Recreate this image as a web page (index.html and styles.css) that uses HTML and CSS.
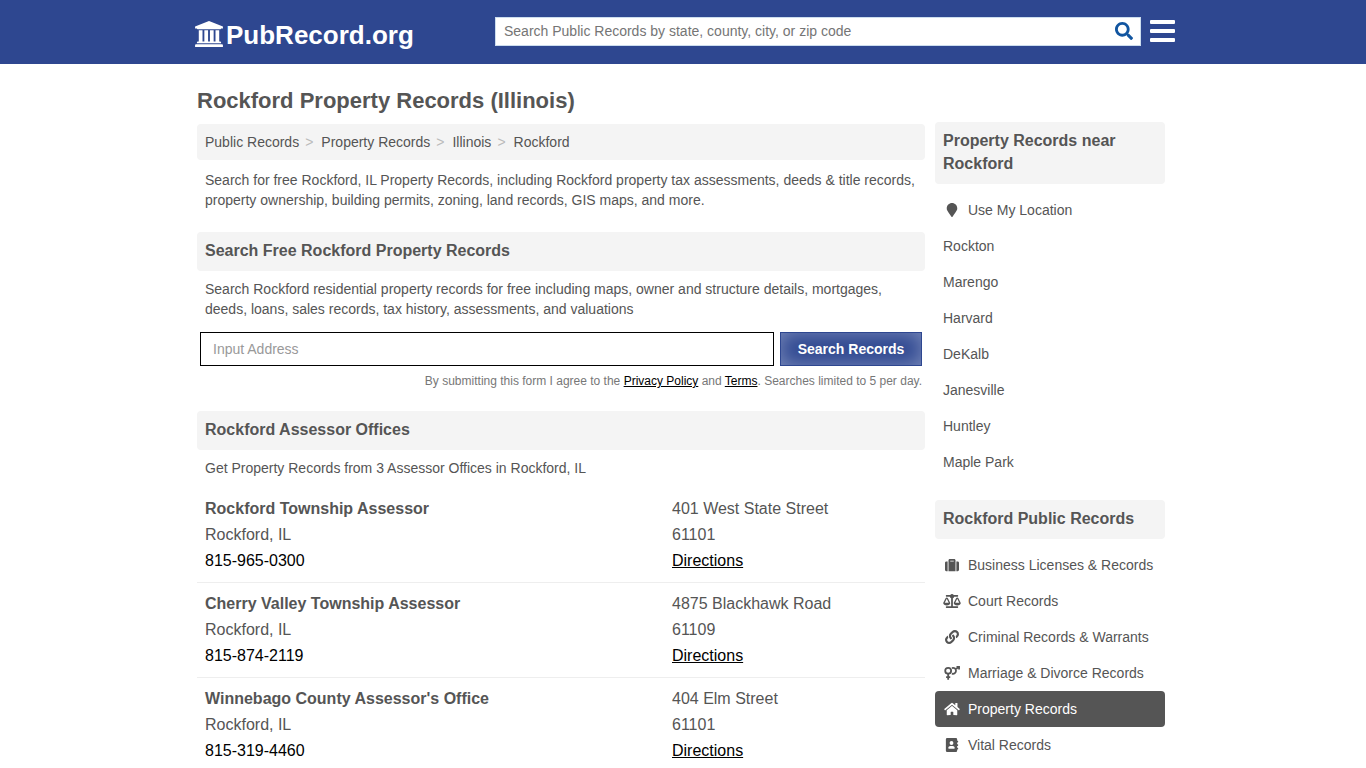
FILE: index.html
```html
<!DOCTYPE html>
<html lang="en">
<head>
<meta charset="utf-8">
<title>Rockford Property Records (Illinois)</title>
<link rel="stylesheet" href="styles.css">
</head>
<body>
<header class="topbar">
  <div class="topbar-inner">
    <a class="logo" href="#">
      <svg class="logo-icon" viewBox="0 0 1920 1792" aria-hidden="true"><path d="M960 0l960 384v128h-128q0 26-20.500 45t-48.500 19H197q-28 0-48.500-19t-20.500-45H0V384zM256 640h256v768h128V640h256v768h128V640h256v768h128V640h256v768h59q28 0 48.500 19t20.500 45v64H128v-64q0-26 20.500-45t48.500-19h59V640zm1595 960q28 0 48.500 19t20.500 45v128H0v-128q0-26 20.500-45t48.500-19h1782z"/></svg>
      <span>PubRecord.org</span>
    </a>
    <form class="site-search">
      <input class="site-search-input" type="text" aria-label="Search Public Records" placeholder="Search Public Records by state, county, city, or zip code">
      <button class="site-search-button" type="button" aria-label="Search">
        <svg viewBox="0 0 512 512" aria-hidden="true"><path d="M505 442.7L405.3 343c-4.500-4.500-10.600-7-17-7H372c27.600-35.300 44-79.700 44-128C416 93.100 322.900 0 208 0S0 93.100 0 208s93.100 208 208 208c48.300 0 92.700-16.400 128-44v16.300c0 6.400 2.500 12.500 7 17l99.700 99.700c9.400 9.400 24.600 9.400 33.900 0l28.300-28.300c9.400-9.400 9.400-24.600.1-34zM208 336c-70.700 0-128-57.200-128-128 0-70.700 57.200-128 128-128 70.700 0 128 57.200 128 128 0 70.700-57.200 128-128 128z"/></svg>
      </button>
    </form>
    <button class="menu-button" type="button" aria-label="Menu">
      <svg viewBox="0 0 25 22" aria-hidden="true"><path d="M1 0h23a1 1 0 0 1 1 1v2a1 1 0 0 1-1 1H1a1 1 0 0 1-1-1V1a1 1 0 0 1 1-1zM1 9h23a1 1 0 0 1 1 1v2a1 1 0 0 1-1 1H1a1 1 0 0 1-1-1v-2a1 1 0 0 1 1-1zM1 18h23a1 1 0 0 1 1 1v2a1 1 0 0 1-1 1H1a1 1 0 0 1-1-1v-2a1 1 0 0 1 1-1z"/></svg>
    </button>
  </div>
</header>

<div class="page">
  <main class="content">
    <h1 class="title">Rockford Property Records (Illinois)</h1>
    <nav aria-label="Breadcrumb">
      <ol class="breadcrumb">
        <li><a href="#">Public Records</a></li>
        <li><a href="#">Property Records</a></li>
        <li><a href="#">Illinois</a></li>
        <li><a href="#">Rockford</a></li>
      </ol>
    </nav>
    <p class="text">Search for free Rockford, IL Property Records, including Rockford property tax assessments, deeds &amp; title records, property ownership, building permits, zoning, land records, GIS maps, and more.</p>

    <section class="section">
      <h2 class="heading">Search Free Rockford Property Records</h2>
      <p class="text">Search Rockford residential property records for free including maps, owner and structure details, mortgages, deeds, loans, sales records, tax history, assessments, and valuations</p>
      <form class="address-form">
        <input class="address-input" type="text" aria-label="Address" placeholder="Input Address">
        <button class="address-button" type="button">Search Records</button>
      </form>
      <p class="terms">By submitting this form I agree to the <a href="#">Privacy Policy</a> and <a href="#">Terms</a>. Searches limited to 5 per day.</p>
    </section>

    <section class="section">
      <h2 class="heading">Rockford Assessor Offices</h2>
      <p class="text">Get Property Records from 3 Assessor Offices in Rockford, IL</p>
      <ul class="offices">
        <li class="office">
          <div><h3 class="office-name">Rockford Township Assessor</h3><div>Rockford, IL</div><a class="phone" href="#">815-965-0300</a></div>
          <div><div>401 West State Street</div><div>61101</div><a class="directions" href="#">Directions</a></div>
        </li>
        <li class="office">
          <div><h3 class="office-name">Cherry Valley Township Assessor</h3><div>Rockford, IL</div><a class="phone" href="#">815-874-2119</a></div>
          <div><div>4875 Blackhawk Road</div><div>61109</div><a class="directions" href="#">Directions</a></div>
        </li>
        <li class="office">
          <div><h3 class="office-name">Winnebago County Assessor's Office</h3><div>Rockford, IL</div><a class="phone" href="#">815-319-4460</a></div>
          <div><div>404 Elm Street</div><div>61101</div><a class="directions" href="#">Directions</a></div>
        </li>
      </ul>
    </section>
  </main>

  <aside class="sidebar">
    <section>
      <h2 class="heading">Property Records near Rockford</h2>
      <ul class="links">
        <li><a href="#"><svg class="icon" viewBox="-64 0 512 512" aria-hidden="true"><path d="M172.268 501.670C26.970 291.031 0 269.413 0 192 0 85.961 85.961 0 192 0s192 85.961 192 192c0 77.413-26.970 99.031-172.268 309.670-9.535 13.774-29.930 13.773-39.464 0z"/></svg>Use My Location</a></li>
        <li><a href="#">Rockton</a></li>
        <li><a href="#">Marengo</a></li>
        <li><a href="#">Harvard</a></li>
        <li><a href="#">DeKalb</a></li>
        <li><a href="#">Janesville</a></li>
        <li><a href="#">Huntley</a></li>
        <li><a href="#">Maple Park</a></li>
      </ul>
    </section>
    <section>
      <h2 class="heading">Rockford Public Records</h2>
      <ul class="links">
        <li><a href="#"><svg class="icon" viewBox="0 0 512 512" aria-hidden="true"><path d="M128 480h256V80c0-26.500-21.500-48-48-48H176c-26.500 0-48 21.500-48 48v400zm64-384h128v32H192V96zm320 80v256c0 26.500-21.500 48-48 48h-48V128h48c26.500 0 48 21.500 48 48zM96 480H48c-26.500 0-48-21.500-48-48V176c0-26.500 21.500-48 48-48h48v352z"/></svg>Business Licenses &amp; Records</a></li>
        <li><a href="#"><svg class="icon" viewBox="0 0 640 512" aria-hidden="true"><path d="M256 336h-.02c0-16.180 1.340-8.730-85.050-181.510-17.650-35.290-68.190-35.360-85.870 0C-2.060 328.750.02 320.330.02 336H0c0 44.180 57.310 80 128 80s128-35.820 128-80zM128 176l72 144H56l72-144zm511.980 160c0-16.180 1.340-8.730-85.050-181.510-17.650-35.290-68.190-35.360-85.870 0-87.120 174.260-85.040 165.840-85.040 181.510H384c0 44.180 57.310 80 128 80s128-35.820 128-80h-.02zM440 320l72-144 72 144H440zm88 128H352V153.250c23.510-10.290 41.160-31.480 46.390-57.250H528c8.840 0 16-7.160 16-16V48c0-8.840-7.160-16-16-16H383.640C369.040 12.680 346.090 0 320 0s-49.040 12.680-63.640 32H112c-8.840 0-16 7.160-16 16v32c0 8.840 7.160 16 16 16h129.610c5.230 25.760 22.870 46.960 46.390 57.250V448H112c-8.840 0-16 7.160-16 16v32c0 8.840 7.160 16 16 16h416c8.840 0 16-7.160 16-16v-32c0-8.840-7.160-16-16-16z"/></svg>Court Records</a></li>
        <li><a href="#"><svg class="icon" viewBox="0 0 512 512" aria-hidden="true"><path d="M326.612 185.391c59.747 59.809 58.927 155.698.36 214.590-.11.12-.24.25-.36.37l-67.200 67.200c-59.270 59.270-155.699 59.262-214.960 0-59.270-59.260-59.270-155.700 0-214.960l37.106-37.106c9.840-9.840 26.786-3.300 27.294 10.606.648 17.722 3.826 35.527 9.690 52.721 1.986 5.822.567 12.262-3.783 16.612l-13.087 13.087c-28.026 28.026-28.905 73.660-1.155 101.960 28.024 28.579 74.086 28.749 102.325.51l67.200-67.190c28.191-28.191 28.073-73.757 0-101.830-3.701-3.694-7.429-6.564-10.341-8.569a16.037 16.037 0 0 1-6.947-12.606c-.396-10.567 3.348-21.456 11.698-29.806l21.054-21.055c5.521-5.521 14.182-6.199 20.584-1.731a152.482 152.482 0 0 1 20.522 17.197zM467.547 44.449c-59.261-59.262-155.690-59.270-214.960 0l-67.200 67.200c-.12.12-.25.25-.36.37-58.566 58.892-59.387 154.781.36 214.590a152.454 152.454 0 0 0 20.521 17.196c6.402 4.468 15.064 3.789 20.584-1.731l21.054-21.055c8.350-8.350 12.094-19.239 11.698-29.806a16.037 16.037 0 0 0-6.947-12.606c-2.912-2.005-6.640-4.875-10.341-8.569-28.073-28.073-28.191-73.639 0-101.830l67.200-67.190c28.239-28.239 74.300-28.069 102.325.51 27.750 28.300 26.872 73.934-1.155 101.960l-13.087 13.087c-4.350 4.350-5.769 10.790-3.783 16.612 5.864 17.194 9.042 34.999 9.690 52.721.509 13.906 17.454 20.446 27.294 10.606l37.106-37.106c59.271-59.259 59.271-155.699.001-214.959z"/></svg>Criminal Records &amp; Warrants</a></li>
        <li><a href="#"><svg class="icon outline" viewBox="0 0 640 512" aria-hidden="true"><circle cx="180" cy="176" r="108"/><path d="M180 284v220M104 410h152M318 76a108 108 0 1 1 0 200M480 108L570 22M484 30h94v94"/></svg>Marriage &amp; Divorce Records</a></li>
        <li><a class="current" href="#" aria-current="page"><svg class="icon" viewBox="0 0 576 512" aria-hidden="true"><path d="M280.370 148.260L96 300.110V464a16 16 0 0 0 16 16l112.060-.29a16 16 0 0 0 15.920-16V368a16 16 0 0 1 16-16h64a16 16 0 0 1 16 16v95.640a16 16 0 0 0 16 16.050L464 480a16 16 0 0 0 16-16V300L295.670 148.260a12.190 12.190 0 0 0-15.300 0zM571.600 251.470L488 182.560V44.050a12 12 0 0 0-12-12h-56a12 12 0 0 0-12 12v72.610L318.470 43a48 48 0 0 0-61 0L4.340 251.470a12 12 0 0 0-1.600 16.900l25.500 31A12 12 0 0 0 45.150 301l235.220-193.740a12.190 12.190 0 0 1 15.300 0L530.900 301a12 12 0 0 0 16.900-1.600l25.500-31a12 12 0 0 0-1.700-16.930z"/></svg>Property Records</a></li>
        <li><a href="#"><svg class="icon" viewBox="0 0 512 512" aria-hidden="true"><path fill-rule="evenodd" d="M80 0h316q48 0 48 48v48h22q14 0 14 14v36q0 14-14 14h-22v64h22q14 0 14 14v36q0 14-14 14h-22v64h22q14 0 14 14v36q0 14-14 14h-22v48q0 48-48 48H80q-48 0-48-48V48Q32 0 80 0zM238 112a70 70 0 1 0 0 140a70 70 0 1 0 0-140zM120 370q0 22 24 22h188q24 0 24-22v-8c0-42-34-74-78-74q-40 18-80 0c-44 0-78 32-78 74z"/></svg>Vital Records</a></li>
      </ul>
    </section>
  </aside>
</div>
</body>
</html>
```
FILE: styles.css
```css
* {
  box-sizing: border-box;
}

body {
  margin: 0;
  background: #fff;
  color: #555;
  font: 14px/20px Arial, "Liberation Sans", sans-serif;
}

h1, h2, h3, p, ul, ol {
  margin: 0;
  padding: 0;
  list-style: none;
}

a {
  color: inherit;
  text-decoration: none;
}

button, input {
  font-family: inherit;
  font-size: 14px;
  border-radius: 0;
}

svg {
  display: block;
  fill: currentColor;
}

.topbar {
  background: #2e4790;
}

.topbar-inner {
  display: flex;
  align-items: center;
  max-width: 984px;
  min-height: 64px;
  margin: 0 auto;
  padding: 0 0 2px 4px;
}

.logo {
  display: flex;
  align-items: center;
  flex: 0 0 300px;
  gap: 3px;
  padding-top: 8px;
  color: #fff;
  font-size: 26px;
  line-height: 30px;
  font-weight: bold;
}

.logo-icon {
  width: 28px;
  height: 26px;
  margin-bottom: 2px;
}

.site-search {
  display: flex;
  flex: 1;
  height: 29px;
  background: #fff;
  border: 1px solid #cde;
}

.site-search-input {
  flex: 1;
  min-width: 0;
  padding: 0 8px;
  border: 0;
  background: none;
}

.site-search-input::placeholder {
  color: #757575;
}

.site-search-button {
  padding: 0 7px;
  border: 0;
  background: none;
  color: #1155a0;
}

.site-search-button svg {
  width: 18px;
  height: 18px;
}

.menu-button {
  margin-left: 9px;
  padding: 0;
  border: 0;
  background: none;
  color: #fff;
}

.menu-button svg {
  width: 25px;
  height: 22px;
}

.page {
  display: flex;
  gap: 10px;
  max-width: 984px;
  margin: 0 auto;
  padding: 0 10px 0 6px;
}

.content {
  flex: 1;
  min-width: 0;
}

.title {
  padding: 23px 0 9px;
  font-size: 22px;
  line-height: 28px;
}

.breadcrumb {
  display: flex;
  padding: 8px;
  background: #f4f4f4;
  border-radius: 4px;
}

.breadcrumb li:not(:last-child)::after {
  content: ">";
  padding: 0 8px 0 6px;
  color: #bbb;
}

.text {
  padding: 10px 8px 0;
}

.section {
  padding-top: 22px;
}

.heading {
  padding: 7px 8px 9px;
  background: #f4f4f4;
  border-radius: 4px;
  font-size: 16px;
  line-height: 23px;
}

.section .text {
  padding-top: 8px;
}

.address-form {
  display: flex;
  gap: 6px;
  padding: 13px 3px 0;
}

.address-input {
  flex: 1;
  min-width: 0;
  height: 34px;
  padding: 0 12px;
  border: 1px solid #000;
}

.address-input::placeholder {
  color: #999;
}

.address-button {
  flex: 0 0 142px;
  padding: 0;
  border: 1px solid #2e4790;
  background: #2e4790;
  box-shadow: inset 0 0 20px #7c8cbb;
  color: #fff;
  font-weight: bold;
}

.terms {
  padding: 7px 3px 0;
  color: #777;
  font-size: 12px;
  line-height: 16px;
  text-align: right;
}

.terms a {
  color: #000;
  text-decoration: underline;
}

.offices {
  padding-top: 10px;
  font-size: 16px;
  line-height: 26px;
}

.office {
  display: grid;
  grid-template-columns: 467px 1fr;
  padding: 8px;
  border-bottom: 1px solid #eee;
}

.office-name {
  font-size: 16px;
}

.phone, .directions {
  color: #000;
}

.directions {
  text-decoration: underline;
}

.sidebar {
  flex: 0 0 230px;
  padding-top: 58px;
}

.links {
  padding: 8px 0 20px;
}

.links a {
  display: flex;
  align-items: center;
  gap: 7px;
  padding: 8px;
  border-radius: 4px;
}

.links .current {
  background: #555;
  color: #fff;
}

.icon {
  width: 18px;
  height: 14px;
}

.outline {
  fill: none;
  stroke: currentColor;
  stroke-width: 66;
}
```
